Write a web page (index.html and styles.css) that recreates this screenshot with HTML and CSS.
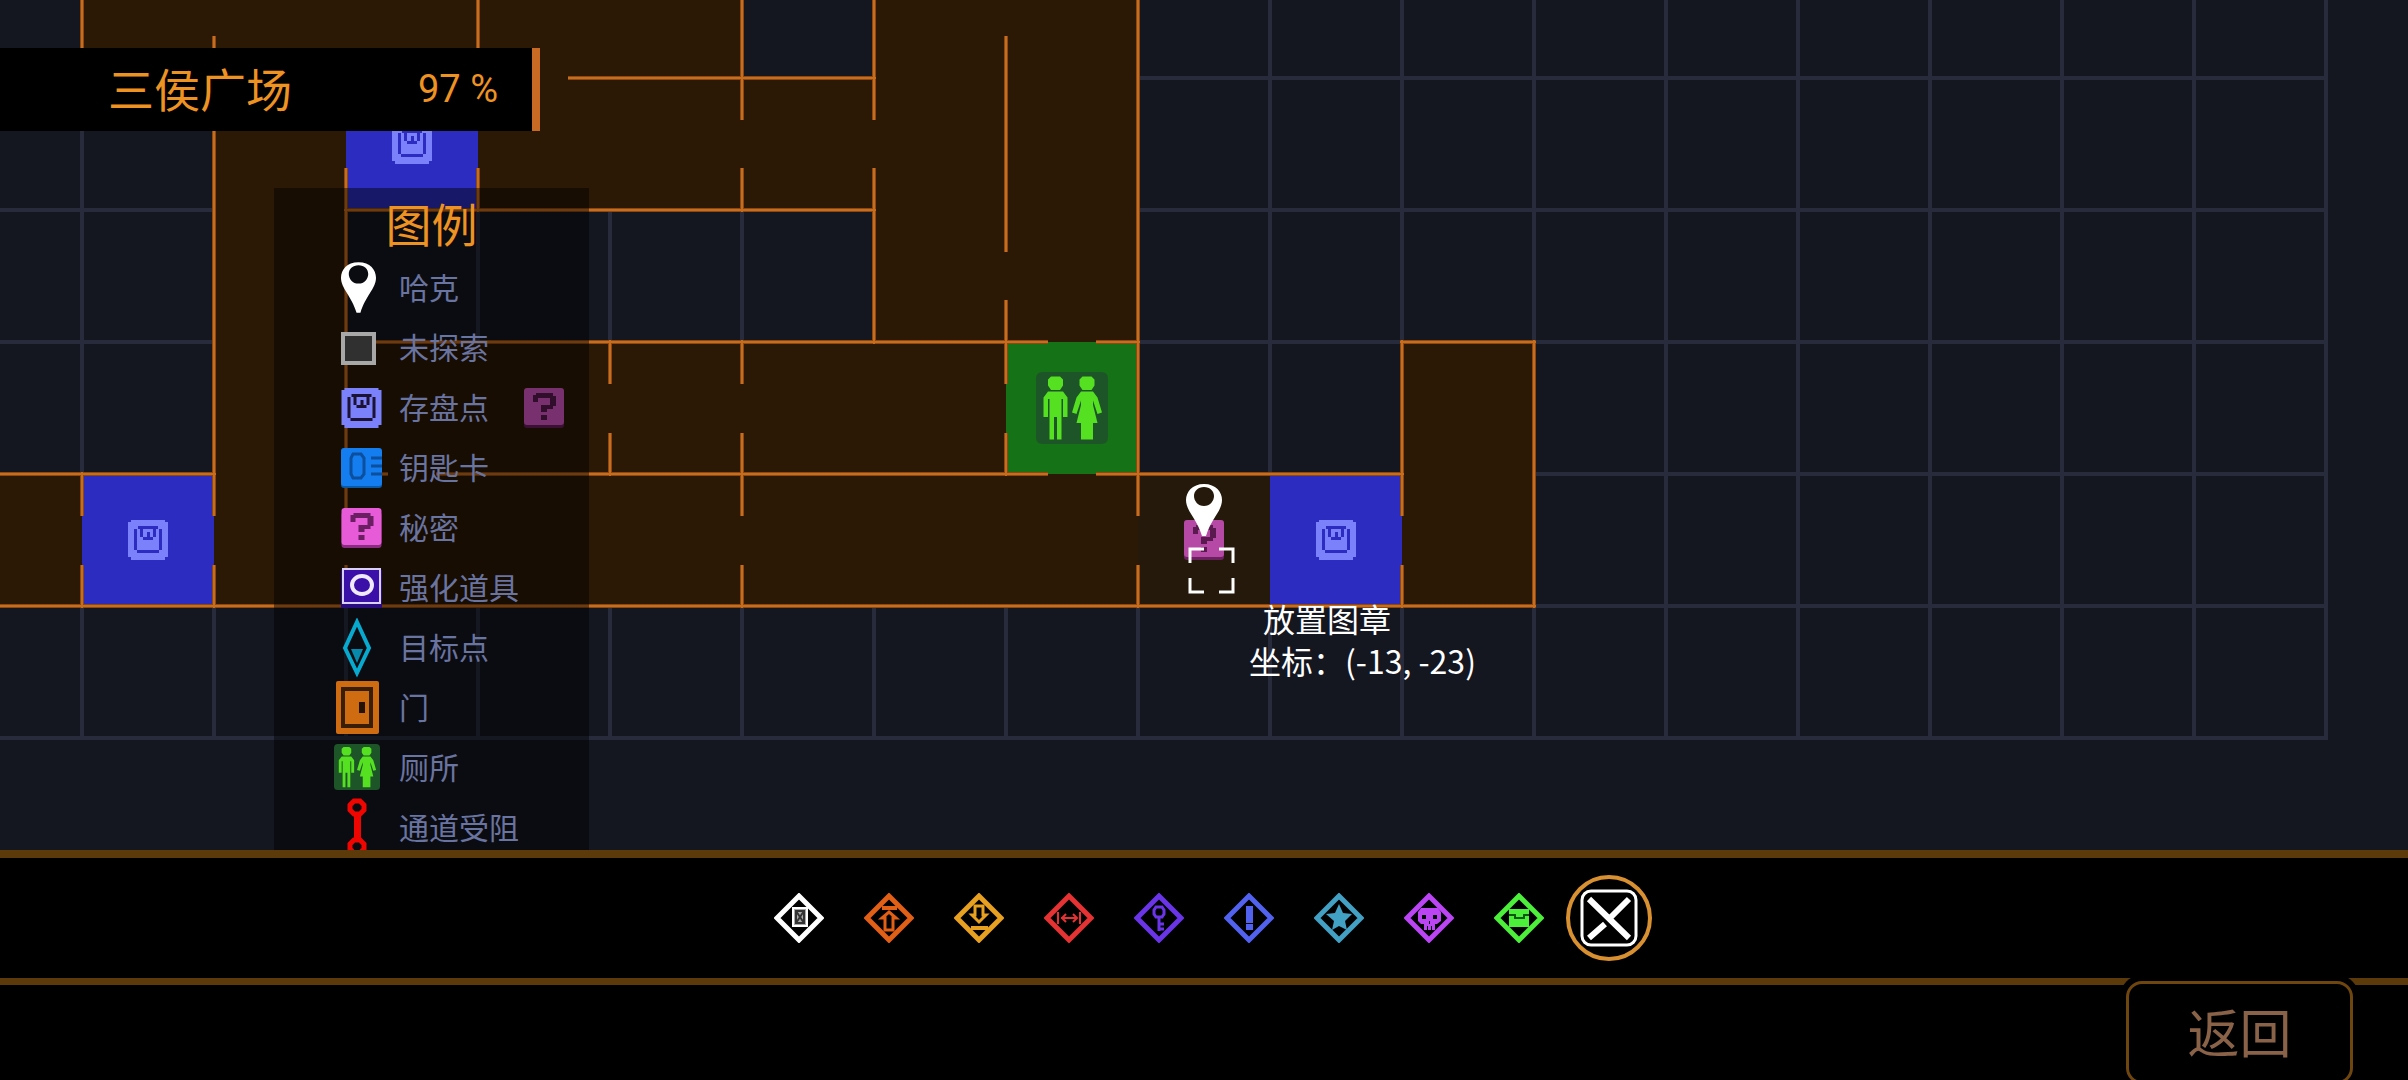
FILE: index.html
```html
<!DOCTYPE html>
<html lang="zh-CN">

<head>
    <meta charset="UTF-8">
    <meta name="viewport" content="width=device-width, initial-scale=1.0">
    <title>三侯广场</title>
    <link rel="stylesheet" href="styles.css">
</head>

<body>
    <!-- shared icons -->
    <svg class="sprites" aria-hidden="true">
        <symbol id="pin" viewBox="0 0 36 52">
            <path fill="#fff" fill-rule="evenodd" d="M18 0C30 0 36 8 36 16 36 27 25 35 20 52H16C11 35 0 27 0 16 0 8 6 0 18 0zM18 3C12 3 8 7 8 12s4 10 10 10 10-5 10-10-4-9-10-9z" />
        </symbol>
        <symbol id="save" viewBox="0 0 40 40">
            <path fill="#7b81fb" d="M3 0h34v2h3v35h-3v3H3v-3H0V2h3z" />
            <path class="ink" d="M10 6h20v3H10zM6 9h3v21H6zM31 9h3v21h-3zM9 30h22v3H9zM12 9h3v8h-3zM25 9h3v8h-3zM15 17h10v3H15zM19 12h3v5h-3z" />
        </symbol>
        <symbol id="secret" viewBox="0 0 40 40">
            <rect class="low" y="4" width="40" height="36" rx="3" />
            <rect class="face" width="40" height="37" rx="3" />
            <path class="mark" d="M9 7h3V5h17v3h3v10h-3v3h-6v3h-6v-7h9V10H14v4H9zM17 27h6v5h-6z" />
        </symbol>
        <symbol id="wc" viewBox="0 0 48 48">
            <rect width="48" height="48" rx="4" fill="#1d5528" />
            <path fill="#55e022" d="M10 3h6l2 2v4l-2 3h-6l-2-3V5zM8 13h10l3 4v13h-3V18h-1v27h-3V30h-2v15H9V18H8v12H5V17z" />
            <path fill="#55e022" d="M31 3h6l2 2v4l-2 3h-6l-2-3V5zM30 13h8l3 4 3 10-3 1-3-9v3l3 12h-3v11h-8V34h-3l3-12v-3l-3 9-3-1 3-10z" />
        </symbol>
        <symbol id="diamond" viewBox="-25 -25 50 50">
            <path fill="none" stroke="currentColor" stroke-width="5" d="M0-22 22 0 0 22-22 0z" />
        </symbol>
    </svg>

    <main class="map">
        <svg class="map-canvas" aria-label="地图">
            <path class="grid" d="M0 78H2326M0 210H2326M0 342H2326M0 474H2326M0 606H2326M0 738H2326M82 0V738M214 0V738M346 0V738M478 0V738M610 0V738M742 0V738M874 0V738M1006 0V738M1138 0V738M1270 0V738M1402 0V738M1534 0V738M1666 0V738M1798 0V738M1930 0V738M2062 0V738M2194 0V738M2326 0V740" />
            <!-- explored rooms -->
            <path class="room" d="M82 0H742V78H82zM874 0h264v78H874zM214 78h924v132H214zM214 210h132v132H214zM874 210h264v132H874zM214 342h792v132H214zM0 474h1138v132H0zM1402 342h132v264h-132z" />
            <path class="room-dark" d="M742 0h132v78H742z" />
            <path class="room-current" d="M1138 474h132v132h-132z" />
            <path class="room-save" d="M346 78h132v132H346zM82 474h132v132H82zM1270 474h132v132h-132z" />
            <path class="room-wc" d="M1006 342h132v132h-132z" />
            <!-- walls, broken where there is a doorway -->
            <g class="walls">
                <path id="walls" d="M82 0V78M82 472V516M82 565V608M214 36V516M214 565V608M346 168V516M346 565V608M478 0V78M478 168V212M610 340V384M610 433V476M742 0V120M742 168V212M742 340V384M742 433V516M742 565V608M874 0V120M874 168V344M1006 36V252M1006 300V384M1006 433V476M1138 0V516M1138 565V608M1402 340V516M1402 565V608M1534 340V608M568 78H876M344 210H876M346 342H1048M1096 342H1140M1400 342H1536M0 474H216M346 474H388M436 474H1048M1096 474H1404M0 606H1536" />
                <use href="#walls" class="wall-core" />
            </g>
            <g class="on-map">
                <use href="#save" x="392" y="124" width="40" height="40" />
                <use href="#save" x="128" y="520" width="40" height="40" />
                <use href="#save" x="1316" y="520" width="40" height="40" />
                <use href="#secret" class="bright" x="524" y="388" width="40" height="40" />
                <use href="#secret" x="1184" y="520" width="40" height="40" />
                <use href="#wc" x="1036" y="372" width="72" height="72" />
            </g>
            <use href="#pin" x="1186" y="483" width="36" height="54" />
            <path class="cursor" d="M1190 563v-14h14M1219 549h14v14M1190 578v14h14M1219 592h14v-14" />
        </svg>

        <header class="area">
            <h1>三侯广场</h1>
            <span class="percent">97 %</span>
        </header>

        <section class="legend">
            <h2>图例</h2>
            <ul>
                <li><svg viewBox="0 0 50 60"><use href="#pin" x="8" y="4" width="35" height="51" /></svg>哈克</li>
                <li><svg viewBox="0 0 50 60"><path fill="#303030" stroke="#a8a8a8" stroke-width="4" d="M10 16h31v29H10z" /></svg>未探索</li>
                <li><svg viewBox="0 0 50 60"><use href="#save" x="8" y="10" width="41" height="40" /></svg>存盘点</li>
                <li><svg viewBox="0 0 50 60">
                        <rect x="8" y="14" width="41" height="36" rx="3" fill="#0b5aa8" />
                        <rect x="8" y="10" width="41" height="38" rx="3" fill="#147ef0" />
                        <path fill="none" stroke="#0b4f9e" stroke-width="3" d="M20 16h8l3 4v16l-3 4h-8l-2-4V20zM38 20h11M38 28h11M38 36h11" />
                    </svg>钥匙卡</li>
                <li><svg viewBox="0 0 50 60"><use href="#secret" x="8" y="10" width="41" height="40" /></svg>秘密</li>
                <li><svg viewBox="0 0 50 60">
                        <path fill="#2a0c80" d="M8 12h41v38H8z" />
                        <path fill="#3a10a8" stroke="#d9d0ff" stroke-width="2" d="M10 11h37v34H10z" />
                        <ellipse cx="29" cy="27" rx="10" ry="9" fill="none" stroke="#efeaff" stroke-width="4" />
                    </svg>强化道具</li>
                <li><svg viewBox="0 0 50 60">
                        <path fill="none" stroke="#08a9cf" stroke-width="4" d="M24 4 36 30 24 55 12 30z" />
                        <path fill="#0689ac" d="M18 31h12l-6 14z" />
                    </svg>目标点</li>
                <li><svg viewBox="0 0 50 60">
                        <rect x="3" y="3" width="43" height="53" rx="2" fill="#cf6c12" />
                        <path fill="none" stroke="#3a1d05" stroke-width="4" d="M10 11h28v37H10z" />
                        <path fill="#241204" d="M26 24h6v11h-6z" />
                    </svg>门</li>
                <li><svg viewBox="0 0 50 60"><use href="#wc" x="0" y="6" width="48" height="46" /></svg>厕所</li>
                <li><svg viewBox="0 0 50 60">
                        <path fill="none" stroke="#f00500" stroke-width="5" d="M21 3h6l4 4v5l-4 4h-6l-4-4V7zM21 42h6l4 4v5l-4 4h-6l-4-4v-5z" />
                        <path fill="#f00500" d="M21 16h7v26h-7z" />
                    </svg>通道受阻</li>
            </ul>
        </section>

        <div class="hint">
            <p class="hint-action">放置图章</p>
            <p>坐标：(-13, -23)</p>
        </div>
    </main>

    <nav class="stamps" aria-label="图章">
        <button class="stamp white" aria-label="方框"><svg viewBox="-25 -25 50 50"><use href="#diamond" x="-25" y="-25" width="50" height="50" />
                <path fill="#aaa" stroke="currentColor" stroke-width="2" d="M-6-10H8V8H-6z" />
                <path fill="none" stroke="#333" stroke-width="2" d="M-3-7H5V5H-3zL5 5M5-7-3 5" /></svg></button>
        <button class="stamp orange" aria-label="向上"><svg viewBox="-25 -25 50 50"><use href="#diamond" x="-25" y="-25" width="50" height="50" />
                <path fill="currentColor" d="M-7-12H8v4H-7z" />
                <path fill="none" stroke="currentColor" stroke-width="3" d="M0-6 7 0H4V12H-4V0H-7z" /></svg></button>
        <button class="stamp amber" aria-label="向下"><svg viewBox="-25 -25 50 50"><use href="#diamond" x="-25" y="-25" width="50" height="50" />
                <path fill="currentColor" d="M-8 8H9v4H-8z" />
                <path fill="none" stroke="currentColor" stroke-width="3" d="M-4-12H4V-3H7L0 4-7-3H-4z" /></svg></button>
        <button class="stamp red" aria-label="阻断"><svg viewBox="-25 -25 50 50"><use href="#diamond" x="-25" y="-25" width="50" height="50" />
                <path fill="none" stroke="currentColor" stroke-width="2" d="M-11-6V6M11-6V6M-8 0H8M-3-4-7 0-3 4M4-4 8 0 4 4" /></svg></button>
        <button class="stamp violet" aria-label="钥匙"><svg viewBox="-25 -25 50 50"><use href="#diamond" x="-25" y="-25" width="50" height="50" />
                <path fill="none" stroke="currentColor" stroke-width="3" d="M-3-11H3L5-8V-4L3-1H-3L-5-4V-8zM0-1V13M0 11H5M0 6H5" /></svg></button>
        <button class="stamp blue" aria-label="注意"><svg viewBox="-25 -25 50 50"><use href="#diamond" x="-25" y="-25" width="50" height="50" />
                <path fill="currentColor" d="M-3-12H4V5H-3zM-3 6H4v6H-3z" /></svg></button>
        <button class="stamp teal" aria-label="星标"><svg viewBox="-25 -25 50 50"><use href="#diamond" x="-25" y="-25" width="50" height="50" />
                <path fill="currentColor" d="M0-14 4-5 13-4 6 3 8 12 0 8-7 12-5 3-13-4-4-5z" /></svg></button>
        <button class="stamp purple" aria-label="骷髅"><svg viewBox="-25 -25 50 50"><use href="#diamond" x="-25" y="-25" width="50" height="50" />
                <path fill="currentColor" fill-rule="evenodd" d="M-8-10H9l3 4V3L8 6H6v6H-5V6H-8l-3-3V-6zM-7-3v4h4v-4zM4-3v4h4v-4zM0 3v3h1V3zM-2 8v4h1V8zM2 8v4h1V8z" /></svg></button>
        <button class="stamp green" aria-label="宝箱"><svg viewBox="-25 -25 50 50"><use href="#diamond" x="-25" y="-25" width="50" height="50" />
                <path fill="currentColor" d="M-10-9H10V9H-10z" />
                <path fill="none" stroke="#0b5a0b" stroke-width="2" d="M-10-3H-4V0H5V-3H10" /></svg></button>
        <button class="stamp clear selected" aria-label="清除"><svg viewBox="-30 -30 60 60">
                <rect x="-27" y="-27" width="54" height="54" rx="9" fill="none" stroke="currentColor" stroke-width="3" />
                <path fill="none" stroke="currentColor" stroke-width="6" d="M-20-19 20 20M20-19 2-1M-4 6-20 20" /></svg></button>
    </nav>

    <footer class="actions">
        <button class="back">返回</button>
    </footer>
</body>

</html>
```
FILE: styles.css
```css
* {
    box-sizing: border-box;
}

body {
    margin: 0;
    height: 100vh;
    display: flex;
    flex-direction: column;
    overflow: hidden;
    background-color: #000;
    font-family: "Noto Sans CJK SC", sans-serif;
}

h1, h2, p, ul {
    margin: 0;
    padding: 0;
    font-weight: normal;
}

button {
    border: none;
    padding: 0;
    background: none;
    font-family: inherit;
    cursor: pointer;
}

.sprites {
    position: absolute;
    width: 0;
    height: 0;
}

.ink {
    fill: var(--ink, #1c1233);
}

.low {
    fill: var(--low, #8a2c80);
}

.face {
    fill: var(--face, #e75ad8);
}

.mark {
    fill: var(--mark, #6b1f62);
}

/* map */

.map {
    position: relative;
    flex: 1;
    min-height: 0;
    overflow: hidden;
    background-color: #141720;
}

.map-canvas {
    display: block;
    width: 100%;
    height: 100%;
}

.grid {
    fill: none;
    stroke: #272b3c;
    stroke-width: 4;
}

.room {
    fill: #2b1905;
}

.room-dark {
    fill: #141720;
}

.room-current {
    fill: #24190b;
}

.room-save {
    fill: #2c2cc0;
}

.room-wc {
    fill: #167216;
}

.walls {
    fill: none;
    stroke: #884a16;
    stroke-width: 4;
}

.wall-core {
    stroke: #cb6c1b;
    stroke-width: 2;
}

.on-map {
    --ink: #2c2cc0;
    --low: #6b2060;
    --face: #b648a6;
    --mark: #5a1a50;
}

.bright {
    --face: #da58ca;
}

.cursor {
    fill: none;
    stroke: #fff;
    stroke-width: 3;
}

.area {
    position: absolute;
    top: 48px;
    left: 0;
    width: 540px;
    height: 83px;
    display: flex;
    justify-content: space-between;
    padding: 0 34px 0 108px;
    border-right: 8px solid #c86a24;
    background-color: #000;
    color: #ee9222;
}

.area h1 {
    font-size: 46px;
    line-height: 78px;
}

.percent {
    font-family: Roboto, sans-serif;
    font-size: 38px;
    line-height: 83px;
}

.legend {
    position: absolute;
    top: 188px;
    bottom: 0;
    left: 274px;
    width: 315px;
    overflow: hidden;
    background-color: rgba(0, 0, 0, 0.45);
}

.legend h2 {
    padding-bottom: 2px;
    color: #ee9222;
    font-size: 46px;
    line-height: 68px;
    text-align: center;
}

.legend li {
    display: flex;
    gap: 16px;
    height: 60px;
    padding-left: 59px;
    color: #6a74a0;
    font-size: 30px;
    line-height: 56px;
    white-space: nowrap;
}

.legend svg {
    width: 50px;
    height: 60px;
}

.hint {
    position: absolute;
    top: 597px;
    left: 1249px;
    color: #fff;
    font-size: 32px;
    line-height: 42px;
}

.hint-action {
    padding-left: 14px;
}

/* stamp bar */

.stamps {
    flex: none;
    display: flex;
    justify-content: center;
    align-items: center;
    height: 135px;
    border-top: 8px solid #5c3a0a;
    border-bottom: 7px solid #5c3a0a;
}

.stamp {
    display: flex;
    justify-content: center;
    align-items: center;
    width: 90px;
    height: 90px;
}

.stamp svg {
    width: 50px;
    height: 50px;
}

.white { color: #fff; }
.orange { color: #e25f16; }
.amber { color: #e8a020; }
.red { color: #e63232; }
.violet { color: #6a35e8; }
.blue { color: #5262f0; }
.teal { color: #42a0c4; }
.purple { color: #bb44f4; }
.green { color: #4cf03a; }
.clear { color: #fff; }

.selected {
    width: 86px;
    height: 86px;
    margin: 0 2px;
    border: 4px solid #d89030;
    border-radius: 50%;
}

.selected svg {
    flex: none;
    width: 60px;
    height: 60px;
}

/* bottom actions, the back button cuts into the line above and runs off the bottom */

.actions {
    position: relative;
    flex: none;
    display: flex;
    justify-content: flex-end;
    align-items: flex-start;
    height: 102px;
    margin-top: -7px;
    padding: 3px 55px 0 0;
    overflow: hidden;
}

.back {
    width: 227px;
    height: 103px;
    padding-bottom: 4px;
    border: 3px solid #70460f;
    border-radius: 16px;
    box-shadow: 0 0 0 6px #000;
    background-color: #000;
    color: #8a6248;
    font-size: 52px;
}
```
